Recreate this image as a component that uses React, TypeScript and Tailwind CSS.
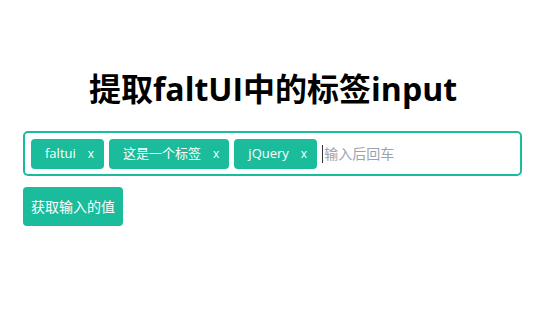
import React, { useState } from 'react';

const FONT = { fontFamily: '"Open Sans", "Noto Sans CJK SC", sans-serif' };

export default function App() {
  const [tags, setTags] = useState<string[]>(['faltui', '这是一个标签', 'jQuery']);
  const [value, setValue] = useState('');

  const removeTag = (index: number) => {
    setTags(tags.filter((_, i) => i !== index));
  };

  const onKeyDown = (e: React.KeyboardEvent<HTMLInputElement>) => {
    if (e.key === 'Enter' && value.trim()) {
      setTags([...tags, value.trim()]);
      setValue('');
    }
  };

  return (
    <div className="min-h-screen bg-white text-black" style={FONT}>
      <h1 className="pt-[65px] pb-[18px] text-center text-[32px] font-bold leading-[48px]">
        提取faltUI中的标签input
      </h1>

      <div className="mx-[23px] flex flex-col items-start gap-[11px]">
        {/* tag input */}
        <div className="flex h-[45px] w-[499px] items-center gap-[5px] rounded-[5px] border-2 border-[#1abc9c] px-[6px]">
          {tags.map((tag, i) => (
            <span
              key={i}
              className="flex h-[30px] items-center rounded-[4px] bg-[#1abc9c] pl-[14px] pr-[10px] text-[13px] text-white"
            >
              <span>{tag}</span>
              <button
                onClick={() => removeTag(i)}
                className="ml-[12px] text-[12px] leading-none text-white"
              >
                x
              </button>
            </span>
          ))}
          <div className="flex flex-1 items-center">
            <span className="h-[18px] w-px bg-[#333]" />
            <input
              value={value}
              onChange={e => setValue(e.target.value)}
              onKeyDown={onKeyDown}
              placeholder="输入后回车"
              className="ml-px flex-1 bg-transparent text-[14px] text-black outline-none placeholder:text-[#9aa3b0]"
            />
          </div>
        </div>

        <button className="h-[39px] w-[100px] rounded-[4px] bg-[#1abc9c] text-[14px] text-white">
          获取输入的值
        </button>
      </div>
    </div>
  );
}
